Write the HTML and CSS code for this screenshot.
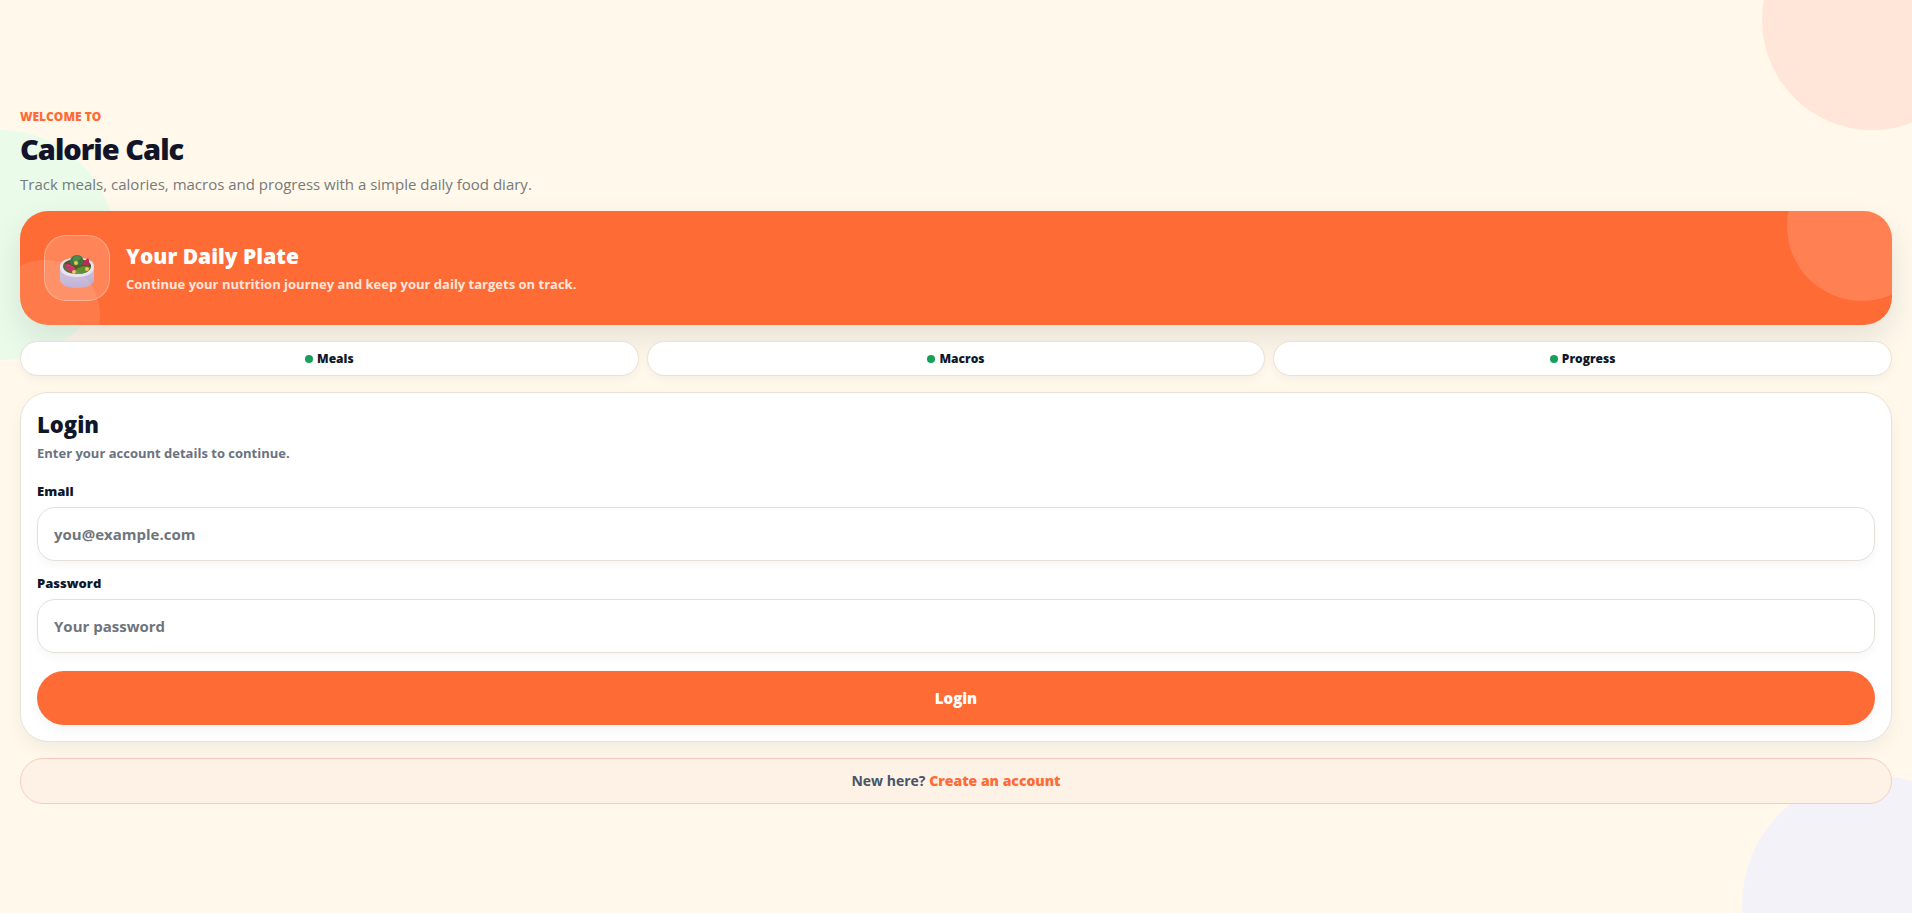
FILE: index.html
```html
<!DOCTYPE html>
<html lang="en">
<head>
<meta charset="utf-8">
<meta name="viewport" content="width=device-width, initial-scale=1">
<title>Calorie Calc</title>
<link rel="stylesheet" href="styles.css">
</head>
<body>
<div class="page">
  <span class="blob blob-peach"></span>
  <span class="blob blob-green"></span>
  <span class="blob blob-lilac"></span>
  <main class="content">
    <header class="intro">
      <p class="eyebrow">WELCOME TO</p>
      <h1 class="title">Calorie Calc</h1>
      <p class="subtitle">Track meals, calories, macros and progress with a simple daily food diary.</p>
    </header>

    <section class="hero">
      <div class="hero-icon">
        <svg viewBox="0 -6 34 39" width="34" height="39" aria-hidden="true">
          <defs>
            <linearGradient id="bowl" x1="0" y1="0" x2="0" y2="1">
              <stop offset="0" stop-color="#d6cfe4"/>
              <stop offset="1" stop-color="#bba9d0"/>
            </linearGradient>
          </defs>
          <path d="M0 12C0 6 6 3 17 3s17 3 17 9v12c0 6-7 9-17 9S0 30 0 24z" fill="url(#bowl)"/>
          <path d="M0 12C0 6 6 3 17 3s17 3 17 9-6 10-17 10S0 18 0 12z" fill="#e6e2ef"/>
          <path d="M3 11c0-4 6-7 14-7s14 3 14 7-4 8-14 8S3 15 3 11z" fill="#4b5a28"/>
          <path d="M15 16c2-4 9-6 15-4 0 4-5 7-13 7z" fill="#5f8f2e"/>
          <path d="M10 7c0-4 3-7 7-7s7 3 6 7c-1 3-4 4-7 4s-6-1-6-4z" fill="#3d7640"/>
          <path d="M13 3c2-3 6-3 8 0l-3 3-5 1z" fill="#4f8b4e"/>
          <path d="M5 9c4-1 8 1 11 5l-2 3C9 17 5 14 5 9z" fill="#b92255"/>
          <path d="M21 9l7-6c2 3 1 6 0 8z" fill="#c1275b"/>
          <path d="M7 10c3 0 6 2 8 4" fill="none" stroke="#d64a78"/>
          <circle cx="16" cy="8" r="2" fill="#f2c84b"/>
          <circle cx="14" cy="17" r="2" fill="#f4b955"/>
          <circle cx="27" cy="14" r="2" fill="#efc351"/>
        </svg>
      </div>
      <div class="hero-text">
        <h2 class="hero-title">Your Daily Plate</h2>
        <p class="hero-note">Continue your nutrition journey and keep your daily targets on track.</p>
      </div>
    </section>

    <ul class="pills">
      <li class="pill"><span class="dot"></span>Meals</li>
      <li class="pill"><span class="dot"></span>Macros</li>
      <li class="pill"><span class="dot"></span>Progress</li>
    </ul>

    <form class="card">
      <h2 class="card-title">Login</h2>
      <p class="card-note">Enter your account details to continue.</p>
      <div class="field">
        <label class="label" for="email">Email</label>
        <input class="input" id="email" type="email" placeholder="you@example.com">
      </div>
      <div class="field">
        <label class="label" for="password">Password</label>
        <input class="input" id="password" type="password" placeholder="Your password">
      </div>
      <button class="submit" type="submit">Login</button>
    </form>

    <p class="signup">New here? <a class="signup-link" href="#">Create an account</a></p>
  </main>
</div>
</body>
</html>
```
FILE: styles.css
```css
* {
  box-sizing: border-box;
  margin: 0;
  padding: 0;
}

body {
  background: #fff8eb;
  color: #0f172a;
  font-family: "Segoe UI", "Open Sans", "Noto Sans", sans-serif;
}

.page {
  position: relative;
  display: flex;
  align-items: center;
  min-height: 100vh;
  padding: 20px;
  overflow: hidden;
}

.blob {
  position: absolute;
  border-radius: 50%;
}

.blob-peach {
  top: -90px;
  right: -70px;
  width: 220px;
  height: 220px;
  background: #ffe6d9;
}

.blob-green {
  top: 130px;
  left: -115px;
  width: 230px;
  height: 230px;
  background: #eafbea;
}

.blob-lilac {
  right: -90px;
  bottom: -122px;
  width: 260px;
  height: 260px;
  background: #f3f2f9;
}

.content {
  position: relative;
  display: flex;
  flex: 1;
  flex-direction: column;
  gap: 16px;
}

.eyebrow {
  color: #ff6b35;
  font-size: 12px;
  font-weight: 800;
  line-height: 16px;
}

.title {
  margin-top: 4px;
  color: #12142a;
  font-size: 29px;
  font-weight: 800;
  line-height: 40px;
  letter-spacing: -1px;
}

.subtitle {
  margin-top: 4px;
  color: #777a78;
  font-size: 15px;
  line-height: 22px;
}

.hero {
  position: relative;
  display: flex;
  align-items: center;
  gap: 16px;
  padding: 24px;
  overflow: hidden;
  border-radius: 28px;
  background: #ff6b35;
  box-shadow: 0 14px 32px rgba(15, 23, 42, 0.1);
  color: #fff;
}

.hero::before,
.hero::after {
  content: "";
  position: absolute;
  border-radius: 50%;
}

.hero::before {
  top: -60px;
  right: -45px;
  width: 150px;
  height: 150px;
  background: rgba(255, 255, 255, 0.15);
}

.hero::after {
  bottom: -45px;
  left: -30px;
  width: 110px;
  height: 110px;
  background: rgba(255, 255, 255, 0.1);
}

.hero-icon {
  display: grid;
  place-items: center;
  width: 66px;
  height: 66px;
  border: 1px solid rgba(255, 255, 255, 0.3);
  border-radius: 22px;
  background: rgba(255, 255, 255, 0.18);
}

.hero-title {
  font-size: 21px;
  font-weight: 800;
  line-height: 28px;
}

.hero-note {
  margin-top: 4px;
  color: #ffe5db;
  font-size: 13px;
  font-weight: 700;
  line-height: 20px;
}

.pills {
  position: relative;
  display: grid;
  grid-template-columns: repeat(3, 1fr);
  gap: 8px;
  list-style: none;
}

.pill {
  display: flex;
  align-items: center;
  justify-content: center;
  gap: 4px;
  height: 35px;
  border: 1px solid #ebe0d3;
  border-radius: 18px;
  background: #fff;
  box-shadow: 0 4px 10px rgba(15, 23, 42, 0.04);
  font-size: 12px;
  font-weight: 800;
}

.dot {
  width: 8px;
  height: 8px;
  border-radius: 50%;
  background: #16a05a;
}

.card {
  position: relative;
  display: flex;
  flex-direction: column;
  padding: 16px;
  border: 1px solid #e9e2d6;
  border-radius: 28px;
  background: #fff;
  box-shadow: 0 8px 18px rgba(15, 23, 42, 0.05);
}

.card-title {
  font-size: 22px;
  font-weight: 800;
  line-height: 30px;
}

.card-note {
  margin-top: 4px;
  margin-bottom: 18px;
  color: #6b7280;
  font-size: 13px;
  font-weight: 700;
  line-height: 20px;
}

.field {
  display: flex;
  flex-direction: column;
  gap: 6px;
  margin-bottom: 12px;
}

.label {
  font-size: 13px;
  font-weight: 800;
  line-height: 20px;
}

.input {
  height: 54px;
  padding: 0 16px;
  border: 1px solid #e5dfda;
  border-radius: 18px;
  background: #fff;
  box-shadow: 0 4px 10px rgba(15, 23, 42, 0.04);
  color: #0f172a;
  font-family: inherit;
  font-size: 15px;
  font-weight: 700;
}

.input::placeholder {
  color: #6f747c;
}

.submit {
  height: 54px;
  margin-top: 6px;
  border: 0;
  border-radius: 27px;
  background: #ff6b35;
  box-shadow: 0 6px 12px rgba(15, 23, 42, 0.04);
  color: #fff;
  font-family: inherit;
  font-size: 15px;
  font-weight: 800;
}

.signup {
  padding: 11px;
  border: 1px solid #f8cdbd;
  border-radius: 23px;
  background: #fef2e6;
  color: #475569;
  font-size: 14px;
  font-weight: 700;
  line-height: 22px;
  text-align: center;
}

.signup-link {
  color: #ff6b35;
  font-weight: 800;
  text-decoration: none;
}
```
